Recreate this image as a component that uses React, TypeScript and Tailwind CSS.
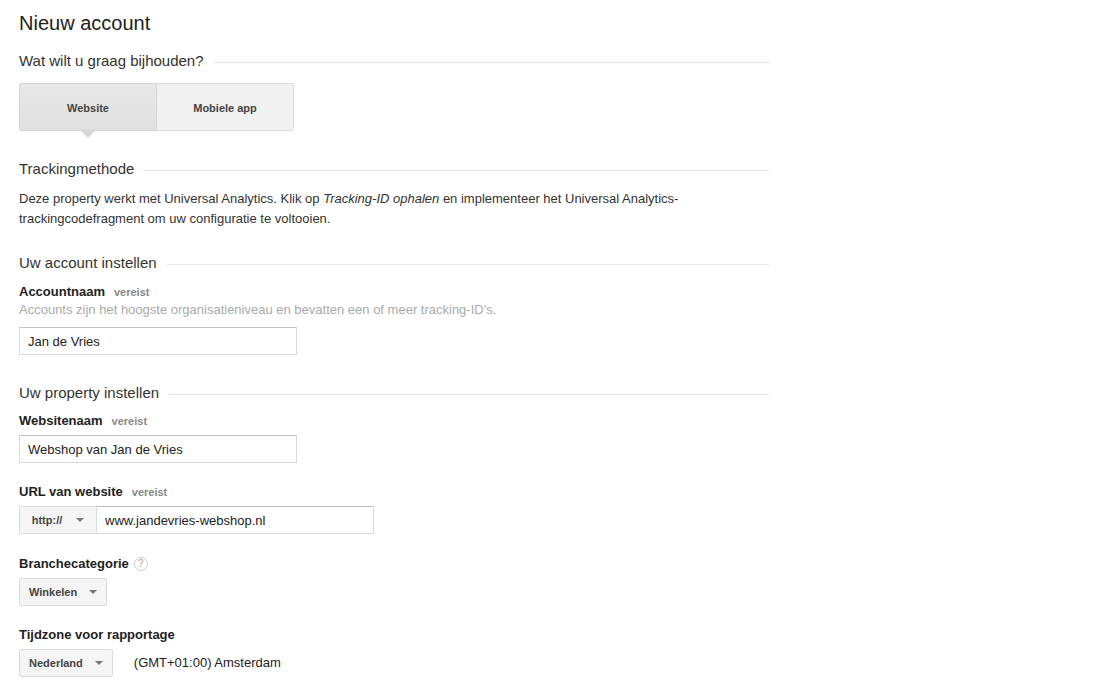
import { ReactNode } from "react";

function Sectie({ titel, className = "" }: { titel: string; className?: string }) {
    return (
        <div className={`flex items-center gap-[10px] h-[20px] ${className}`}>
            <h2 className="text-[15px] leading-[20px] text-[#333] whitespace-nowrap">{titel}</h2>
            <div className="grow h-px bg-[#e5e5e5] mt-[2px]" />
        </div>
    );
}

function Label({ children, vereist, className = "" }: { children: ReactNode; vereist?: boolean; className?: string }) {
    return (
        <div className={`flex items-baseline h-[18px] leading-[18px] ${className}`}>
            <span className="text-[13px] font-bold text-[#222]">{children}</span>
            {vereist && <span className="ml-[9px] text-[11px] font-bold text-[#888]">vereist</span>}
        </div>
    );
}

function Caret() {
    return <span className="inline-block w-0 h-0 border-l-[4px] border-r-[4px] border-t-[4px] border-l-transparent border-r-transparent border-t-[#777]" />;
}

function Keuze({ label, className = "" }: { label: string; className?: string }) {
    return (
        <button className={`h-[28px] flex items-center gap-[12px] pl-[9px] pr-[9px] bg-[#f5f5f5] border border-[#dcdcdc] rounded-[2px] text-[11px] font-bold text-[#444] ${className}`}>
            <span>{label}</span>
            <Caret />
        </button>
    );
}

function Invoer({ waarde }: { waarde: string }) {
    return (
        <input
            type="text"
            defaultValue={waarde}
            className="w-[278px] h-[28px] border border-[#d9d9d9] border-t-[#c0c0c0] px-[8px] text-[13px] text-[#222] focus:outline-none"
        />
    );
}

export default function App() {
    return (
        <div className="min-h-screen bg-white pl-[19px] pt-[11px] font-['Liberation_Sans',Arial,sans-serif]">
            <div className="w-[750px] flex flex-col">
                <h1 className="text-[20px] leading-[24px] text-[#222]">Nieuw account</h1>

                <Sectie titel="Wat wilt u graag bijhouden?" className="mt-[16px]" />

                <div className="mt-[12px] flex">
                    <div className="relative">
                        <button className="w-[138px] h-[48px] pt-[2px] bg-gradient-to-b from-[#e8e8e8] to-[#e0e0e0] border border-[#d4d4d4] rounded-l-[2px] text-[11px] font-bold text-[#444]">
                            Website
                        </button>
                        <span className="absolute left-1/2 -translate-x-1/2 top-[48px] w-0 h-0 border-l-[7px] border-r-[7px] border-t-[7px] border-l-transparent border-r-transparent border-t-[#d8d8d8]" />
                    </div>
                    <button className="w-[137px] h-[48px] pt-[2px] bg-[#f1f1f1] border border-l-0 border-[#dcdcdc] rounded-r-[2px] text-[11px] font-bold text-[#444]">
                        Mobiele app
                    </button>
                </div>

                <Sectie titel="Trackingmethode" className="mt-[28px]" />
                <p className="mt-[10px] text-[13px] leading-[20px] text-[#333]">
                    Deze property werkt met Universal Analytics. Klik op <i>Tracking-ID ophalen</i> en implementeer het Universal Analytics-
                    <br />
                    trackingcodefragment om uw configuratie te voltooien.
                </p>

                <Sectie titel="Uw account instellen" className="mt-[24px]" />
                <Label vereist className="mt-[10px]">Accountnaam</Label>
                <p className="text-[13px] leading-[18px] text-[#aaa]">
                    Accounts zijn het hoogste organisatieniveau en bevatten een of meer tracking-ID's.
                </p>
                <div className="mt-[8px]">
                    <Invoer waarde="Jan de Vries" />
                </div>

                <Sectie titel="Uw property instellen" className="mt-[28px]" />
                <Label vereist className="mt-[9px]">Websitenaam</Label>
                <div className="mt-[5px]">
                    <Invoer waarde="Webshop van Jan de Vries" />
                </div>

                <Label vereist className="mt-[20px]">URL van website</Label>
                <div className="mt-[5px] flex">
                    <button className="w-[78px] h-[28px] flex items-center justify-center gap-[14px] bg-[#f5f5f5] border border-[#dcdcdc] text-[11px] font-bold text-[#444]">
                        <span>http://</span>
                        <Caret />
                    </button>
                    <input
                        type="text"
                        defaultValue="www.jandevries-webshop.nl"
                        className="w-[277px] h-[28px] border border-l-0 border-[#d9d9d9] border-t-[#c0c0c0] px-[8px] text-[13px] text-[#222] focus:outline-none"
                    />
                </div>

                <div className="mt-[21px] flex items-center h-[18px]">
                    <span className="text-[13px] font-bold text-[#222]">Branchecategorie</span>
                    <span className="ml-[5px] w-[14px] h-[14px] rounded-full border border-[#ccc] flex items-center justify-center text-[10px] leading-none text-[#aaa]">?</span>
                </div>
                <div className="mt-[5px] flex">
                    <Keuze label="Winkelen" />
                </div>

                <Label className="mt-[20px]">Tijdzone voor rapportage</Label>
                <div className="mt-[5px] flex items-center">
                    <Keuze label="Nederland" />
                    <span className="ml-[21px] text-[13px] text-[#222]">(GMT+01:00) Amsterdam</span>
                </div>
            </div>
        </div>
    );
}
